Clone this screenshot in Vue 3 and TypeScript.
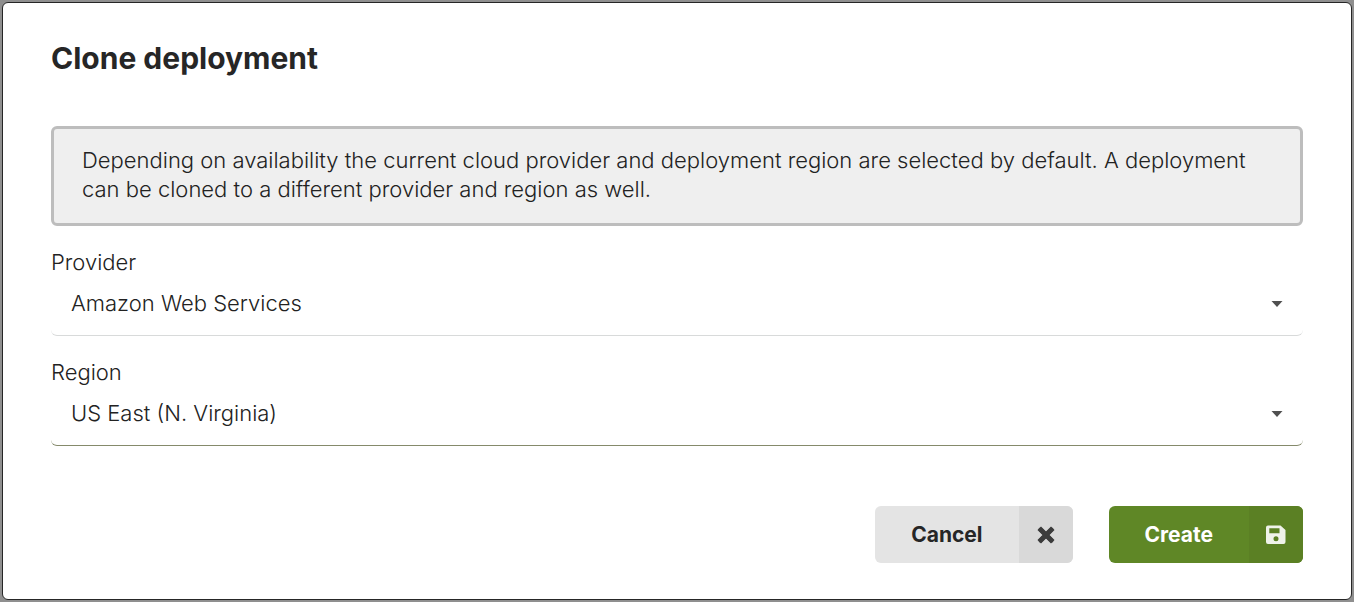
<script setup lang="ts">
import { ref } from 'vue'

const providers: string[] = ['Amazon Web Services', 'Google Cloud Platform', 'Microsoft Azure']
const regions: string[] = ['US East (N. Virginia)', 'US West (Oregon)', 'EU (Frankfurt)']

const provider = ref(providers[0])
const region = ref(regions[0])
</script>

<template>
  <div class="backdrop">
    <form class="dialog" role="dialog" aria-labelledby="dialog-title" @submit.prevent>
      <h1 id="dialog-title" class="title">Clone deployment</h1>

      <p class="notice">
        Depending on availability the current cloud provider and deployment region are selected by
        default. A deployment can be cloned to a different provider and region as well.
      </p>

      <div class="field">
        <label for="provider">Provider</label>
        <div class="control">
          <select id="provider" v-model="provider">
            <option v-for="item in providers" :key="item">{{ item }}</option>
          </select>
          <svg class="caret" viewBox="0 0 12 6" aria-hidden="true"><path d="M0.5 0h11L6 6z" /></svg>
        </div>
      </div>

      <div class="field">
        <label for="region">Region</label>
        <div class="control active">
          <select id="region" v-model="region">
            <option v-for="item in regions" :key="item">{{ item }}</option>
          </select>
          <svg class="caret" viewBox="0 0 12 6" aria-hidden="true"><path d="M0.5 0h11L6 6z" /></svg>
        </div>
      </div>

      <div class="actions">
        <button type="button" class="button cancel">
          <span class="text">Cancel</span>
          <span class="icon">
            <svg width="18" height="18" viewBox="0 0 18 18" aria-hidden="true">
              <path d="M4 4l10 10M14 4L4 14" fill="none" stroke="currentColor" stroke-width="5" stroke-linecap="square" />
              <path d="M3.500 3.500l11 11M14.500 3.500l-11 11" fill="none" stroke="currentColor" stroke-width="4" stroke-linecap="round" />
            </svg>
          </span>
        </button>
        <button type="submit" class="button create">
          <span class="text">Create</span>
          <span class="icon">
            <svg width="20" height="20" viewBox="0 0 20 20" aria-hidden="true">
              <path fill="currentColor" fill-rule="evenodd" d="M2 0.5h12.5L19.5 5v12a2 2 0 0 1-2 2H2a2 2 0 0 1-2-2V2.500a2 2 0 0 1 2-2zM3.300 3.300v5H13.500v-5zM10 11.200a2.500 2.500 0 1 0 0 5 2.500 2.500 0 0 0 0-5z" />
            </svg>
          </span>
        </button>
      </div>
    </form>
  </div>
</template>

<style>
body {
  margin: 0;
  background: #8f8f8f;
}
</style>

<style scoped>
.backdrop {
  padding: 2px;
  background: #8f8f8f;
  font-family: Inter, "Liberation Sans", sans-serif;
  font-size: 22px;
  font-weight: 300;
  color: #222;
}

.dialog {
  box-sizing: border-box;
  padding: 36px 48px;
  border: 1px solid #262626;
  border-radius: 6px;
  background: #fff;
}

.title {
  margin: 0;
  font-size: 30px;
  line-height: 39px;
  font-weight: 700;
  color: #262626;
}

.notice {
  margin: 48px 0 20px;
  padding: 17px 28px 19px;
  border: 3px solid #bdbdbd;
  border-radius: 6px;
  background: #efefef;
  line-height: 29px;
}

.field {
  margin-bottom: 20px;
}

.field label {
  display: block;
  line-height: 32px;
}

.control {
  display: flex;
  align-items: center;
  height: 57px;
  border-bottom: 1px solid #d8dada;
  border-radius: 6px;
}

.control.active {
  border-bottom-color: #858a6b;
}

.control select {
  flex: 1;
  width: 100%;
  height: 100%;
  margin-right: -32px;
  padding: 0 44px 7px 20px;
  appearance: none;
  border: 0;
  outline: 0;
  background: transparent;
  font: inherit;
  color: inherit;
}

.caret {
  width: 12px;
  height: 6px;
  margin: 0 20px 6px 0;
  fill: #505050;
  pointer-events: none;
}

.actions {
  display: flex;
  justify-content: flex-end;
  gap: 36px;
  padding-top: 40px;
}

.button {
  display: flex;
  height: 57px;
  padding: 0;
  overflow: hidden;
  border: 0;
  border-radius: 6px;
  font: inherit;
  font-size: 21px;
  font-weight: 700;
  cursor: pointer;
}

.text {
  padding: 0 36px;
  line-height: 57px;
}

.icon {
  display: flex;
  align-items: center;
  justify-content: center;
  width: 54px;
  height: 57px;
}

.cancel {
  background: #e4e4e4;
  color: #262626;
}

.cancel .icon {
  background: #d9d9d9;
  color: #3c3c3c;
}

.create {
  background: #5f8726;
  color: #fff;
}

.create .icon {
  background: #5b8024;
  color: #eff2e9;
}
</style>
